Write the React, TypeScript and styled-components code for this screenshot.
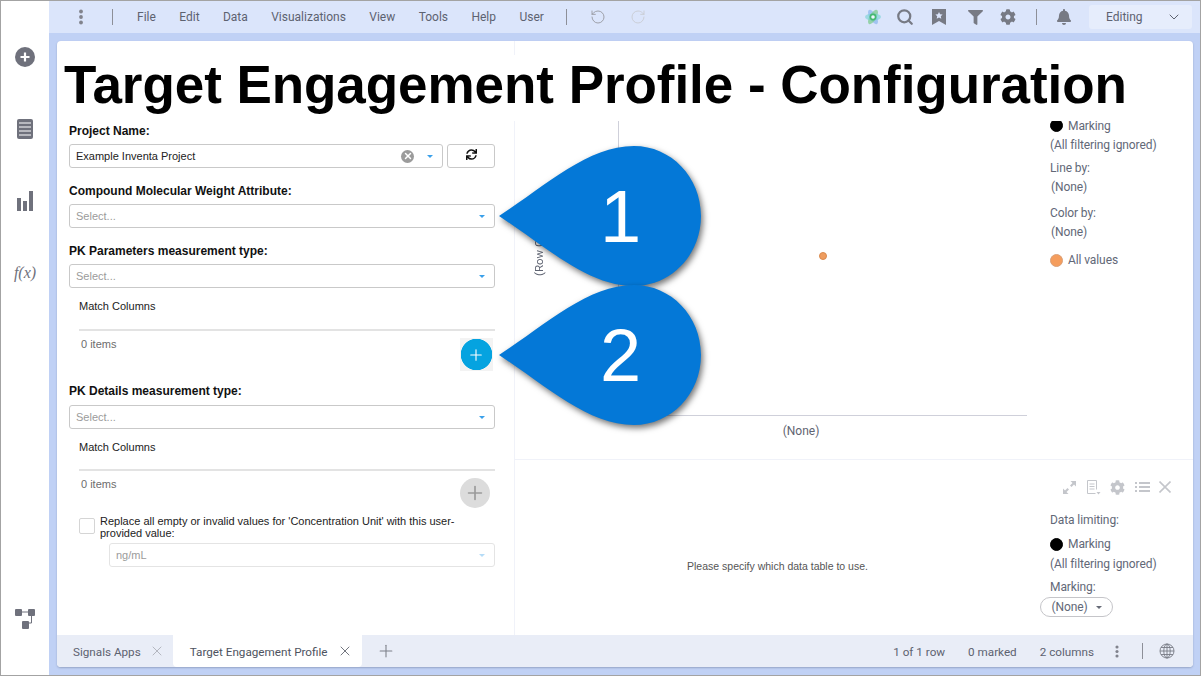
import type { FC, ReactNode } from "react";
import { createGlobalStyle, styled } from "styled-components";
import { FaBell, FaCog, FaFilter, FaSync } from "react-icons/fa";
import { Plus, RotateCcw, RotateCw, Search, X, ChevronDown } from "lucide-react";

const GlobalStyle = createGlobalStyle`
  html, body {
    margin: 0;
    padding: 0;
    background: #fff;
  }
  * {
    box-sizing: border-box;
  }
`;

const Window = styled.div`
  position: relative;
  width: 1201px;
  height: 676px;
  display: flex;
  overflow: hidden;
  border: 1px solid #a3a3a3;
  background: #c0d1f5;
  font-family: Roboto, "Liberation Sans", sans-serif;
`;

const Sidebar = styled.aside`
  width: 48px;
  flex: none;
  display: flex;
  flex-direction: column;
  align-items: center;
  background: #fff;
  padding: 20px 0 46px;
  color: #6f717c;
`;

const SideSlot = styled.div`
  height: 72px;
  display: flex;
  align-items: center;
  justify-content: center;
`;

const SideFoot = styled(SideSlot)`
  height: 20px;
  margin-top: auto;
`;

const Fx = styled.span`
  font-family: "Liberation Serif", serif;
  font-style: italic;
  font-size: 16px;
  color: #6f717c;
`;

const Body = styled.div`
  flex: 1;
  min-width: 0;
  display: flex;
  flex-direction: column;
`;

const Toolbar = styled.header`
  height: 32px;
  flex: none;
  display: flex;
  align-items: center;
  background: #dbe5fb;
  color: #5d6270;
  font-size: 12px;
  padding-left: 29px;
`;

const Dots = styled.svg`
  flex: none;
  color: #81838d;
`;

const Sep = styled.span<{ $left: number; $right: number }>`
  width: 1px;
  height: 16px;
  flex: none;
  background: #8d8f98;
  margin: 0 ${({ $right }) => $right}px 0 ${({ $left }) => $left}px;
`;

const MenuList = styled.nav`
  display: flex;
  gap: 23.4px;
`;

const ToolIcon = styled.span<{ $width: number; $color?: string; $gap?: number }>`
  width: ${({ $width }) => $width}px;
  flex: none;
  display: flex;
  align-items: center;
  justify-content: center;
  margin-left: ${({ $gap }) => $gap ?? 0}px;
  color: ${({ $color }) => $color ?? "#777a84"};
`;

const ToolRight = styled.div`
  margin-left: auto;
  display: flex;
  align-items: center;
  padding-right: 8px;
`;

const ModeBox = styled.div`
  width: 103px;
  height: 24px;
  display: flex;
  align-items: center;
  justify-content: space-between;
  padding: 0 10px 0 17px;
  border-radius: 3px;
  background: #e6edfc;
  color: #5d6270;
`;

const Stage = styled.div`
  flex: 1;
  min-height: 0;
  padding: 8px 7px 8px 8px;
`;

const Card = styled.main`
  height: 100%;
  display: flex;
  flex-direction: column;
  overflow: hidden;
  border-radius: 4px;
  background: #fff;
  box-shadow: 0 1px 2px rgba(70, 80, 110, 0.35);
`;

const Panes = styled.div`
  flex: 1;
  min-height: 0;
  display: flex;
`;

const FormPane = styled.section`
  width: 458px;
  flex: none;
  padding: 81px 19px 0 12px;
  border-right: 1px solid #f0f2f9;
`;

const FieldLabel = styled.label<{ $top?: number; $bottom?: number }>`
  display: block;
  height: 18px;
  line-height: 18px;
  margin: ${({ $top }) => $top ?? 0}px 0 ${({ $bottom }) => $bottom ?? 4}px;
  font-family: "Liberation Sans", sans-serif;
  font-size: 12px;
  font-weight: 700;
  color: #111;
`;

const FieldRow = styled.div`
  display: flex;
  gap: 4px;
`;

const SelectBox = styled.div<{ $disabled?: boolean; $indent?: number }>`
  flex: 1;
  height: 24px;
  display: flex;
  align-items: center;
  margin-left: ${({ $indent }) => $indent ?? 0}px;
  padding: 0 9px 0 6px;
  border: 1px solid ${({ $disabled }) => ($disabled ? "#e4e4e4" : "#c9c9c9")};
  border-radius: 3px;
  font-family: "Liberation Sans", sans-serif;
  font-size: 11px;
`;

const SelectText = styled.span<{ $tone: string }>`
  flex: 1;
  color: ${({ $tone }) => $tone};
`;

const Caret = styled.span<{ $disabled?: boolean }>`
  width: 0;
  height: 0;
  border-left: 3.5px solid transparent;
  border-right: 3.5px solid transparent;
  border-top: 3.5px solid ${({ $disabled }) => ($disabled ? "#b5dcf7" : "#3aa0ea")};
`;

const ClearDot = styled.span`
  width: 13px;
  height: 13px;
  margin-right: 13px;
  border-radius: 50%;
  display: flex;
  align-items: center;
  justify-content: center;
  background: #9b9b9b;
  color: #fff;
`;

const RefreshButton = styled.button`
  width: 48px;
  height: 24px;
  flex: none;
  display: flex;
  align-items: center;
  justify-content: center;
  padding: 0 0 3px;
  border: 1px solid #c9c9c9;
  border-radius: 3px;
  background: #fff;
  color: #111;
`;

const MatchBlock = styled.div<{ $gap: number }>`
  padding-left: 10px;
  margin-top: 9px;
  font-family: "Liberation Sans", sans-serif;
  font-size: 11px;

  & > p {
    margin: 0 0 ${({ $gap }) => $gap}px;
    height: 18px;
    line-height: 18px;
    color: #222;
  }
`;

const MatchFooter = styled.div`
  display: flex;
  justify-content: space-between;
  align-items: flex-start;
  border-top: 2px solid #e3e3e3;
`;

const ItemCount = styled.span`
  margin: 4px 0 0 2px;
  line-height: 18px;
  color: #6d6d6d;
`;

const RoundAdd = styled.button<{ $active?: boolean }>`
  width: ${({ $active }) => ($active ? 33 : 30)}px;
  height: ${({ $active }) => ($active ? 33 : 30)}px;
  margin: 7px ${({ $active }) => ($active ? 2.5 : 5)}px 0 0;
  padding: 0;
  display: flex;
  align-items: center;
  justify-content: center;
  border: none;
  border-radius: ${({ $active }) => ($active ? "0" : "50%")};
  background: ${({ $active }) =>
    $active
      ? "radial-gradient(circle closest-side, #05a3e0 15.4px, #f3f3f3 16px)"
      : "#dcdcdc"};
  color: ${({ $active }) => ($active ? "#fff" : "#9a9a9a")};
`;

const CheckRow = styled.div`
  display: flex;
  gap: 5px;
  margin: 7px 0 4px 10px;
  font-family: "Liberation Sans", sans-serif;
  font-size: 11px;
  line-height: 12px;
  color: #222;
`;

const CheckBox = styled.span`
  width: 16px;
  height: 16px;
  flex: none;
  margin-top: 3px;
  border: 1px solid #d5d5d5;
  border-radius: 2px;
`;

const Visuals = styled.section`
  flex: 1;
  min-width: 0;
  display: flex;
  flex-direction: column;
`;

const ChartPane = styled.div`
  height: 419px;
  flex: none;
  display: flex;
  border-bottom: 1px solid #f0f2f9;
`;

const ChartWrap = styled.div`
  width: 512px;
  flex: none;
  padding: 30px 0 0 103px;
  position: relative;
`;

const YAxisLabel = styled.span`
  position: absolute;
  left: 17px;
  top: 180px;
  width: 14px;
  height: 55px;
  writing-mode: vertical-rl;
  transform: rotate(180deg);
  font-size: 11.5px;
  line-height: 14px;
  white-space: nowrap;
  color: #5f6472;
`;

const Plot = styled.div`
  height: 345px;
  display: flex;
  align-items: center;
  justify-content: center;
  padding-top: 26px;
  border-left: 1px solid #cfd0da;
  border-bottom: 1px solid #cfd0da;
`;

const PlotDot = styled.span`
  width: 8px;
  height: 8px;
  margin-right: 1px;
  border-radius: 50%;
  background: #ef9d5f;
  border: 1px solid #d98a4e;
`;

const XAxisLabel = styled.div`
  padding: 8px 43px 0 0;
  text-align: center;
  font-size: 12px;
  color: #5f6472;
`;

const Legend = styled.aside<{ $top: number }>`
  flex: 1;
  padding: ${({ $top }) => $top}px 0 0 23px;
  font-size: 12px;
  letter-spacing: -0.1px;
  color: #626877;
`;

const LegendLine = styled.div<{ $top?: number; $indent?: number }>`
  display: flex;
  align-items: center;
  gap: 5px;
  height: 20px;
  margin-top: ${({ $top }) => $top ?? 0}px;
  padding-left: ${({ $indent }) => $indent ?? 0}px;
  white-space: nowrap;
`;

const Swatch = styled.span<{ $fill: string; $edge?: string; $lift?: boolean }>`
  width: 13px;
  height: 13px;
  flex: none;
  margin-top: ${({ $lift }) => ($lift ? -2 : 0)}px;
  border-radius: 50%;
  background: ${({ $fill }) => $fill};
  border: 1px solid ${({ $edge, $fill }) => $edge ?? $fill};
`;

const TablePane = styled.div`
  flex: 1;
  min-height: 0;
  display: flex;
`;

const EmptyMessage = styled.div`
  width: 525px;
  flex: none;
  padding-top: 100px;
  text-align: center;
  font-family: "Liberation Sans", sans-serif;
  font-size: 10.5px;
  color: #555;
`;

const PaneIcons = styled.div`
  display: flex;
  align-items: center;
  justify-content: space-between;
  height: 16px;
  width: 108px;
  margin: 19px 0 0 23px;
  color: #c4c6cb;
`;

const TableLegend = styled.aside`
  flex: 1;
  font-size: 12px;
  letter-spacing: -0.1px;
  color: #626877;
`;

const TableLegendBody = styled.div`
  padding: 15px 0 0 10px;
`;

const PillSelect = styled.div`
  width: 73px;
  height: 20px;
  display: flex;
  align-items: center;
  justify-content: center;
  gap: 8px;
  margin-left: -10px;
  border: 1px solid #c5c5c9;
  border-radius: 10px;
`;

const PillCaret = styled.span`
  width: 0;
  height: 0;
  border-left: 3.5px solid transparent;
  border-right: 3.5px solid transparent;
  border-top: 3.5px solid #666b77;
`;

const TabBar = styled.footer`
  height: 32px;
  flex: none;
  display: flex;
  align-items: stretch;
  background: #e9edf7;
  font-size: 11.7px;
  color: #5d6270;
`;

const Tab = styled.div<{ $active?: boolean }>`
  display: flex;
  align-items: center;
  gap: ${({ $active }) => ($active ? 9 : 8)}px;
  padding: 1px ${({ $active }) => ($active ? 9 : 8)}px 0 ${({ $active }) => ($active ? 17 : 16)}px;
  background: ${({ $active }) => ($active ? "#fff" : "transparent")};
  color: ${({ $active }) => ($active ? "#4e5360" : "#5d6270")};
  border-radius: 0 0 4px 4px;
`;

const TabClose = styled.span<{ $active?: boolean }>`
  display: flex;
  margin-top: -1px;
  color: ${({ $active }) => ($active ? "#73767f" : "#b4b7c0")};
`;

const TabAdd = styled.span`
  display: flex;
  align-items: center;
  margin-left: 14px;
  color: #7d808a;
`;

const StatusList = styled.div`
  margin-left: auto;
  display: flex;
  align-items: center;
  gap: 23px;
  padding: 1px 18px 0 0;
`;

const StatusTools = styled.div`
  display: flex;
  align-items: center;
  margin: -1px 0 0 -3px;
`;

const TitleBand = styled.div`
  position: absolute;
  left: 56px;
  top: 54px;
  width: 1136px;
  height: 66px;
  padding-left: 7px;
  background: #fff;
  font-family: "Liberation Sans", sans-serif;
  font-size: 53px;
  font-weight: 700;
  letter-spacing: -0.05px;
  line-height: 60px;
  color: #000;
  white-space: nowrap;
`;

const Callout = styled.div<{ $top: number }>`
  position: absolute;
  left: 497px;
  top: ${({ $top }) => $top}px;
  width: 204px;
  height: 141px;
  display: flex;
  align-items: center;
  padding-left: 102px;
  color: #fff;
  font-family: "Liberation Sans", sans-serif;
  font-size: 74px;
  line-height: 1;

  svg {
    position: absolute;
    inset: 0;
    overflow: visible;
    filter: drop-shadow(2px 3px 3px rgba(0, 0, 0, 0.55));
  }

  span {
    position: relative;
  }
`;

const VDots: FC<{ height?: number }> = ({ height = 16 }) => (
  <Dots width="6" height={height} viewBox="0 0 6 16">
    <g fill="currentColor">
      <circle cx="3" cy="2.5" r="1.9" />
      <circle cx="3" cy="8" r="1.9" />
      <circle cx="3" cy="13.5" r="1.9" />
    </g>
  </Dots>
);

const AppMark: FC = () => (
  <svg width="18" height="16" viewBox="0 0 18 16">
    <ellipse cx="9" cy="8" rx="8" ry="3.4" fill="#8fb8ee" opacity="0.75" transform="rotate(60 9 8)" />
    <ellipse cx="9" cy="8" rx="8" ry="3.4" fill="#7fcb8f" opacity="0.75" transform="rotate(-60 9 8)" />
    <ellipse cx="9" cy="8" rx="8" ry="3.4" fill="#6ccfd0" opacity="0.55" />
    <circle cx="9" cy="8" r="3.4" fill="#45b86e" />
    <circle cx="9" cy="8" r="1.8" fill="#eef6ff" />
  </svg>
);

const BookmarkStar: FC = () => (
  <svg width="14" height="16" viewBox="0 0 14 16">
    <path d="M0 0h14v16l-7-4-7 4z" fill="currentColor" />
    <path
      d="M7 3l1.100 2.300 2.500.3-1.800 1.700.5 2.500L7 8.600 4.700 9.800l.5-2.500L3.400 5.600l2.500-.3z"
      fill="#dbe5fb"
    />
  </svg>
);

const ExpandIcon: FC = () => (
  <svg width="13" height="13" viewBox="0 0 13 13" fill="currentColor">
    <path d="M7.500 0H13v5.500L11 3.500 8.500 6 7 4.500 9.500 2z" />
    <path d="M0 7.500V13h5.500L3.500 11 6 8.500 4.500 7 2 9.500z" />
  </svg>
);

const NotesIcon: FC = () => (
  <svg width="15" height="15" viewBox="0 0 15 15" fill="none" stroke="currentColor" strokeWidth="1">
    <path d="M9.500 13.500h-8v-13h9v9" />
    <path d="M3.500 4h5M3.500 6.500h5M3.500 9h5" />
    <path d="M10.500 12h4l-2 2.500z" fill="currentColor" stroke="none" />
  </svg>
);

const ListIcon: FC = () => (
  <svg width="15" height="12" viewBox="0 0 15 12" fill="currentColor">
    <rect x="0" y="1" width="2" height="2" />
    <rect x="4" y="1" width="11" height="2" />
    <rect x="0" y="5" width="2" height="2" />
    <rect x="4" y="5" width="11" height="2" />
    <rect x="0" y="9" width="2" height="2" />
    <rect x="4" y="9" width="11" height="2" />
  </svg>
);

const CloseGlyph: FC = () => (
  <svg width="12" height="12" viewBox="0 0 12 12" stroke="currentColor" strokeWidth="1.6">
    <path d="M0.500 0.500l11 11M11.500 0.500l-11 11" />
  </svg>
);

const GlobeIcon: FC = () => (
  <svg width="16" height="16" viewBox="0 0 16 16" fill="none" stroke="#777a84" strokeWidth="0.9">
    <circle cx="8" cy="8" r="7" />
    <ellipse cx="8" cy="8" rx="3.200" ry="7" />
    <path d="M1 8h14M8 1v14M2 4.500h12M2 11.500h12" />
  </svg>
);

const CirclePlus: FC = () => (
  <svg width="20" height="20" viewBox="0 0 20 20">
    <circle cx="10" cy="10" r="10" fill="#6f717c" />
    <path d="M10 5.500v9M5.500 10h9" stroke="#fff" strokeWidth="2.200" />
  </svg>
);

const ReportIcon: FC = () => (
  <svg width="16" height="20" viewBox="0 0 16 20">
    <rect width="16" height="20" rx="2" fill="#6f717c" />
    <path d="M2 4h12M2 8h12M2 12h12M2 16h12" stroke="#fff" strokeWidth="1.200" />
  </svg>
);

const BarsIcon: FC = () => (
  <svg width="16" height="20" viewBox="0 0 16 20" fill="#6f717c">
    <rect x="0" y="7" width="4" height="13" />
    <rect x="6" y="10" width="4" height="10" />
    <rect x="12" y="0" width="4" height="20" />
  </svg>
);

const FlowIcon: FC = () => (
  <svg width="20" height="20" viewBox="0 0 20 20" fill="#6f717c">
    <rect x="0" y="0" width="7" height="7" rx="1" />
    <rect x="13" y="0" width="7" height="7" rx="1" />
    <rect x="7" y="12" width="7" height="8" rx="1" />
    <path d="M7 3h6M16.500 7v7H14" stroke="#6f717c" fill="none" />
  </svg>
);

const Teardrop: FC<{ value: string; top: number }> = ({ value, top }) => (
  <Callout $top={top}>
    <svg width="204" height="141" viewBox="0 0 204 141">
      <path
        d="M1 70C50 38 90 0 136 0C173 0 203 31 203 70C203 109 173 140 136 140C90 140 50 102 1 70Z"
        fill="#0478d7"
      />
    </svg>
    <span>{value}</span>
  </Callout>
);

const Select: FC<{ text: string; disabled?: boolean; indent?: number; trailing?: ReactNode }> = ({
  text,
  disabled,
  indent,
  trailing,
}) => (
  <SelectBox $disabled={disabled} $indent={indent}>
    <SelectText $tone={text === "Select..." || disabled ? "#9b9b9b" : "#222"}>{text}</SelectText>
    {trailing}
    <Caret $disabled={disabled} />
  </SelectBox>
);

const MENU = ["File", "Edit", "Data", "Visualizations", "View", "Tools", "Help", "User"];

const App: FC = () => (
  <>
    <GlobalStyle />
    <Window>
      <Sidebar>
        <SideSlot>
          <CirclePlus />
        </SideSlot>
        <SideSlot>
          <ReportIcon />
        </SideSlot>
        <SideSlot>
          <BarsIcon />
        </SideSlot>
        <SideSlot>
          <Fx>f(x)</Fx>
        </SideSlot>
        <SideFoot>
          <FlowIcon />
        </SideFoot>
      </Sidebar>
      <Body>
        <Toolbar>
          <VDots />
          <Sep $left={28} $right={24} />
          <MenuList>
            {MENU.map((item) => (
              <span key={item}>{item}</span>
            ))}
          </MenuList>
          <Sep $left={22} $right={20} />
          <ToolIcon $width={22} $color="#999ba3">
            <RotateCcw size={16} strokeWidth={1.4} />
          </ToolIcon>
          <ToolIcon $width={18} $color="#c9ccd4" $gap={20}>
            <RotateCw size={16} strokeWidth={1.4} />
          </ToolIcon>
          <ToolRight>
            <ToolIcon $width={32}>
              <AppMark />
            </ToolIcon>
            <ToolIcon $width={32}>
              <Search size={18} strokeWidth={3} />
            </ToolIcon>
            <ToolIcon $width={36}>
              <BookmarkStar />
            </ToolIcon>
            <ToolIcon $width={36}>
              <FaFilter size={15} />
            </ToolIcon>
            <ToolIcon $width={30}>
              <FaCog size={16} />
            </ToolIcon>
            <Sep $left={13} $right={13} />
            <ToolIcon $width={28}>
              <FaBell size={16} />
            </ToolIcon>
            <ToolIcon $width={11} />
            <ModeBox>
              Editing
              <ChevronDown size={16} strokeWidth={1.5} />
            </ModeBox>
          </ToolRight>
        </Toolbar>
        <Stage>
          <Card>
            <Panes>
              <FormPane>
                <FieldLabel>Project Name:</FieldLabel>
                <FieldRow>
                  <Select
                    text="Example Inventa Project"
                    trailing={
                      <ClearDot>
                        <X size={10} strokeWidth={3.5} />
                      </ClearDot>
                    }
                  />
                  <RefreshButton aria-label="Refresh">
                    <FaSync size={11} />
                  </RefreshButton>
                </FieldRow>

                <FieldLabel $top={14}>Compound Molecular Weight Attribute:</FieldLabel>
                <Select text="Select..." />

                <FieldLabel $top={14}>PK Parameters measurement type:</FieldLabel>
                <Select text="Select..." />
                <MatchBlock $gap={14}>
                  <p>Match Columns</p>
                  <MatchFooter>
                    <ItemCount>0 items</ItemCount>
                    <RoundAdd $active aria-label="Add">
                      <Plus size={18} strokeWidth={1.5} />
                    </RoundAdd>
                  </MatchFooter>
                </MatchBlock>

                <FieldLabel $top={11} $bottom={5}>PK Details measurement type:</FieldLabel>
                <Select text="Select..." />
                <MatchBlock $gap={13}>
                  <p>Match Columns</p>
                  <MatchFooter>
                    <ItemCount>0 items</ItemCount>
                    <RoundAdd aria-label="Add">
                      <Plus size={22} strokeWidth={1.8} />
                    </RoundAdd>
                  </MatchFooter>
                </MatchBlock>
                <CheckRow>
                  <CheckBox />
                  <span>Replace all empty or invalid values for 'Concentration Unit' with this user-provided value:</span>
                </CheckRow>
                <Select text="ng/mL" disabled indent={40} />
              </FormPane>

              <Visuals>
                <ChartPane>
                  <ChartWrap>
                    <YAxisLabel>(Row Count)</YAxisLabel>
                    <Plot>
                      <PlotDot />
                    </Plot>
                    <XAxisLabel>(None)</XAxisLabel>
                  </ChartWrap>
                  <Legend $top={75}>
                    <LegendLine>
                      <Swatch $fill="#000" $lift />
                      Marking
                    </LegendLine>
                    <LegendLine $top={-1}>(All filtering ignored)</LegendLine>
                    <LegendLine $top={3}>Line by:</LegendLine>
                    <LegendLine $top={-1} $indent={1}>(None)</LegendLine>
                    <LegendLine $top={6}>Color by:</LegendLine>
                    <LegendLine $top={-1} $indent={1}>(None)</LegendLine>
                    <LegendLine $top={8}>
                      <Swatch $fill="#f59d5d" $edge="#d9a078" />
                      All values
                    </LegendLine>
                  </Legend>
                </ChartPane>
                <TablePane>
                  <EmptyMessage>Please specify which data table to use.</EmptyMessage>
                  <TableLegend>
                    <PaneIcons>
                      <ExpandIcon />
                      <NotesIcon />
                      <FaCog size={15} />
                      <ListIcon />
                      <CloseGlyph />
                    </PaneIcons>
                    <TableLegendBody>
                      <LegendLine>Data limiting:</LegendLine>
                      <LegendLine $top={4}>
                        <Swatch $fill="#000" />
                        Marking
                      </LegendLine>
                      <LegendLine>(All filtering ignored)</LegendLine>
                      <LegendLine $top={3}>Marking:</LegendLine>
                      <PillSelect>
                        (None)
                        <PillCaret />
                      </PillSelect>
                    </TableLegendBody>
                  </TableLegend>
                </TablePane>
              </Visuals>
            </Panes>
            <TabBar>
              <Tab>
                Signals Apps
                <TabClose>
                  <X size={16} strokeWidth={1.5} />
                </TabClose>
              </Tab>
              <Tab $active>
                Target Engagement Profile
                <TabClose $active>
                  <X size={16} strokeWidth={1.5} />
                </TabClose>
              </Tab>
              <TabAdd>
                <Plus size={20} strokeWidth={1.3} />
              </TabAdd>
              <StatusList>
                <span>1 of 1 row</span>
                <span>0 marked</span>
                <span>2 columns</span>
                <StatusTools>
                  <VDots height={13} />
                  <Sep $left={22} $right={16} />
                  <GlobeIcon />
                </StatusTools>
              </StatusList>
            </TabBar>
          </Card>
        </Stage>
      </Body>
      <TitleBand>Target Engagement Profile - Configuration</TitleBand>
      <Teardrop value="1" top={145} />
      <Teardrop value="2" top={284} />
    </Window>
  </>
);

export default App;
